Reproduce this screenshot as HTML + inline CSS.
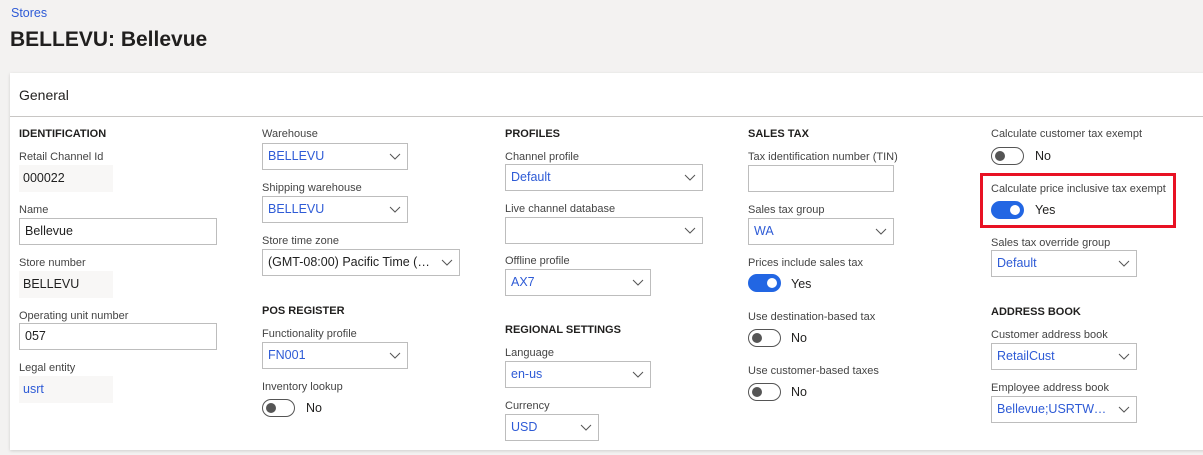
<!DOCTYPE html>
<html><head><meta charset="utf-8"><style>
*{box-sizing:border-box;margin:0;padding:0}
body{width:1203px;height:455px;background:#f3f2f1;font-family:"Liberation Sans",sans-serif;position:relative;overflow:hidden;color:#323130}
.a{position:absolute;white-space:nowrap}
.l{font-size:11px;color:#444;line-height:14px;margin-top:1px}
.h{font-size:11px;font-weight:bold;color:#201f1e;line-height:14px;margin-top:1px}
.box{position:absolute;border:1px solid #bdbdbd;background:#fff;height:27px;font-size:12.5px;line-height:25px;padding-left:5px;color:#1f1f1f;white-space:nowrap;overflow:hidden}
.sel{padding-right:24px;text-overflow:ellipsis}
.ro{position:absolute;background:#f8f7f6;height:27px;font-size:12.5px;line-height:27px;padding-left:4px;color:#1f1f1f}
.blue{color:#2e5bd6}
.sel svg{position:absolute;right:6px;top:9px}
.tg{position:absolute;width:33px;height:18px;border-radius:9px;border:1px solid #555;background:#fff}
.tg::after{content:"";position:absolute;left:3px;top:3px;width:10px;height:10px;border-radius:50%;background:#555}
.tg.on{background:#2266e3;border-color:#2266e3}
.tg.on::after{left:auto;right:3px;background:#fff}
.tv{position:absolute;font-size:12.5px;line-height:14px;color:#201f1e}
</style></head><body>
<div class="a" style="left:11px;top:6px;font-size:12.5px;color:#2e5bd6">Stores</div>
<div class="a" style="left:10px;top:28px;font-size:21px;font-weight:bold;color:#201f1e">BELLEVU: Bellevue</div>
<div class="a" style="left:10px;top:73px;width:1200px;height:377px;background:#fff;box-shadow:0 1px 3px rgba(0,0,0,.15)"></div>
<div class="a" style="left:10px;top:116px;width:1193px;height:1px;background:#c8c6c4"></div>
<div class="a" style="left:19px;top:87px;font-size:14px;color:#201f1e">General</div>

<!-- col1 -->
<div class="a h" style="left:19px;top:126px">IDENTIFICATION</div>
<div class="a l" style="left:19px;top:149px">Retail Channel Id</div>
<div class="ro" style="left:19px;top:165px;width:94px">000022</div>
<div class="a l" style="left:19px;top:202px">Name</div>
<div class="box" style="left:19px;top:218px;width:198px">Bellevue</div>
<div class="a l" style="left:19px;top:255px">Store number</div>
<div class="ro" style="left:19px;top:271px;width:94px">BELLEVU</div>
<div class="a l" style="left:19px;top:308px">Operating unit number</div>
<div class="box" style="left:19px;top:323px;width:198px">057</div>
<div class="a l" style="left:19px;top:360px">Legal entity</div>
<div class="ro blue" style="left:19px;top:376px;width:94px">usrt</div>

<!-- col2 -->
<div class="a l" style="left:262px;top:126px">Warehouse</div>
<div class="box sel blue" style="left:262px;top:143px;width:146px">BELLEVU<svg width="12" height="7"><path d="M1 1l5 5 5-5" fill="none" stroke="#555"/></svg></div>
<div class="a l" style="left:262px;top:180px">Shipping warehouse</div>
<div class="box sel blue" style="left:262px;top:196px;width:146px">BELLEVU<svg width="12" height="7"><path d="M1 1l5 5 5-5" fill="none" stroke="#555"/></svg></div>
<div class="a l" style="left:262px;top:233px">Store time zone</div>
<div class="box sel" style="left:262px;top:249px;width:198px">(GMT-08:00) Pacific Time (US &amp; Canada)<svg width="12" height="7"><path d="M1 1l5 5 5-5" fill="none" stroke="#555"/></svg></div>
<div class="a h" style="left:262px;top:303px">POS REGISTER</div>
<div class="a l" style="left:262px;top:326px">Functionality profile</div>
<div class="box sel blue" style="left:262px;top:342px;width:146px">FN001<svg width="12" height="7"><path d="M1 1l5 5 5-5" fill="none" stroke="#555"/></svg></div>
<div class="a l" style="left:262px;top:379px">Inventory lookup</div>
<div class="tg" style="left:262px;top:399px"></div><div class="tv" style="left:306px;top:401px">No</div>

<!-- col3 -->
<div class="a h" style="left:505px;top:126px">PROFILES</div>
<div class="a l" style="left:505px;top:149px">Channel profile</div>
<div class="box sel blue" style="left:505px;top:164px;width:198px">Default<svg width="12" height="7"><path d="M1 1l5 5 5-5" fill="none" stroke="#555"/></svg></div>
<div class="a l" style="left:505px;top:201px">Live channel database</div>
<div class="box sel" style="left:505px;top:217px;width:198px"><svg width="12" height="7"><path d="M1 1l5 5 5-5" fill="none" stroke="#555"/></svg></div>
<div class="a l" style="left:505px;top:253px">Offline profile</div>
<div class="box sel blue" style="left:505px;top:269px;width:146px">AX7<svg width="12" height="7"><path d="M1 1l5 5 5-5" fill="none" stroke="#555"/></svg></div>
<div class="a h" style="left:505px;top:322px">REGIONAL SETTINGS</div>
<div class="a l" style="left:505px;top:345px">Language</div>
<div class="box sel blue" style="left:505px;top:361px;width:146px">en-us<svg width="12" height="7"><path d="M1 1l5 5 5-5" fill="none" stroke="#555"/></svg></div>
<div class="a l" style="left:505px;top:398px">Currency</div>
<div class="box sel blue" style="left:505px;top:414px;width:94px">USD<svg width="12" height="7"><path d="M1 1l5 5 5-5" fill="none" stroke="#555"/></svg></div>

<!-- col4 -->
<div class="a h" style="left:748px;top:126px">SALES TAX</div>
<div class="a l" style="left:748px;top:149px">Tax identification number (TIN)</div>
<div class="box" style="left:748px;top:165px;width:146px"></div>
<div class="a l" style="left:748px;top:202px">Sales tax group</div>
<div class="box sel blue" style="left:748px;top:218px;width:146px">WA<svg width="12" height="7"><path d="M1 1l5 5 5-5" fill="none" stroke="#555"/></svg></div>
<div class="a l" style="left:748px;top:255px">Prices include sales tax</div>
<div class="tg on" style="left:748px;top:274px"></div><div class="tv" style="left:791px;top:277px">Yes</div>
<div class="a l" style="left:748px;top:309px">Use destination-based tax</div>
<div class="tg" style="left:748px;top:329px"></div><div class="tv" style="left:791px;top:331px">No</div>
<div class="a l" style="left:748px;top:363px">Use customer-based taxes</div>
<div class="tg" style="left:748px;top:383px"></div><div class="tv" style="left:791px;top:385px">No</div>

<!-- col5 -->
<div class="a l" style="left:991px;top:126px">Calculate customer tax exempt</div>
<div class="tg" style="left:991px;top:147px"></div><div class="tv" style="left:1035px;top:149px">No</div>
<div class="a" style="left:980px;top:173px;width:196px;height:55px;border:3px solid #e81123"></div>
<div class="a l" style="left:991px;top:181px">Calculate price inclusive tax exempt</div>
<div class="tg on" style="left:991px;top:201px"></div><div class="tv" style="left:1035px;top:203px">Yes</div>
<div class="a l" style="left:991px;top:235px">Sales tax override group</div>
<div class="box sel blue" style="left:991px;top:250px;width:146px">Default<svg width="12" height="7"><path d="M1 1l5 5 5-5" fill="none" stroke="#555"/></svg></div>
<div class="a h" style="left:991px;top:304px">ADDRESS BOOK</div>
<div class="a l" style="left:991px;top:327px">Customer address book</div>
<div class="box sel blue" style="left:991px;top:343px;width:146px">RetailCust<svg width="12" height="7"><path d="M1 1l5 5 5-5" fill="none" stroke="#555"/></svg></div>
<div class="a l" style="left:991px;top:380px">Employee address book</div>
<div class="box sel blue" style="left:991px;top:396px;width:146px">Bellevue;USRTWest;USRT<svg width="12" height="7"><path d="M1 1l5 5 5-5" fill="none" stroke="#555"/></svg></div>
</body></html>
